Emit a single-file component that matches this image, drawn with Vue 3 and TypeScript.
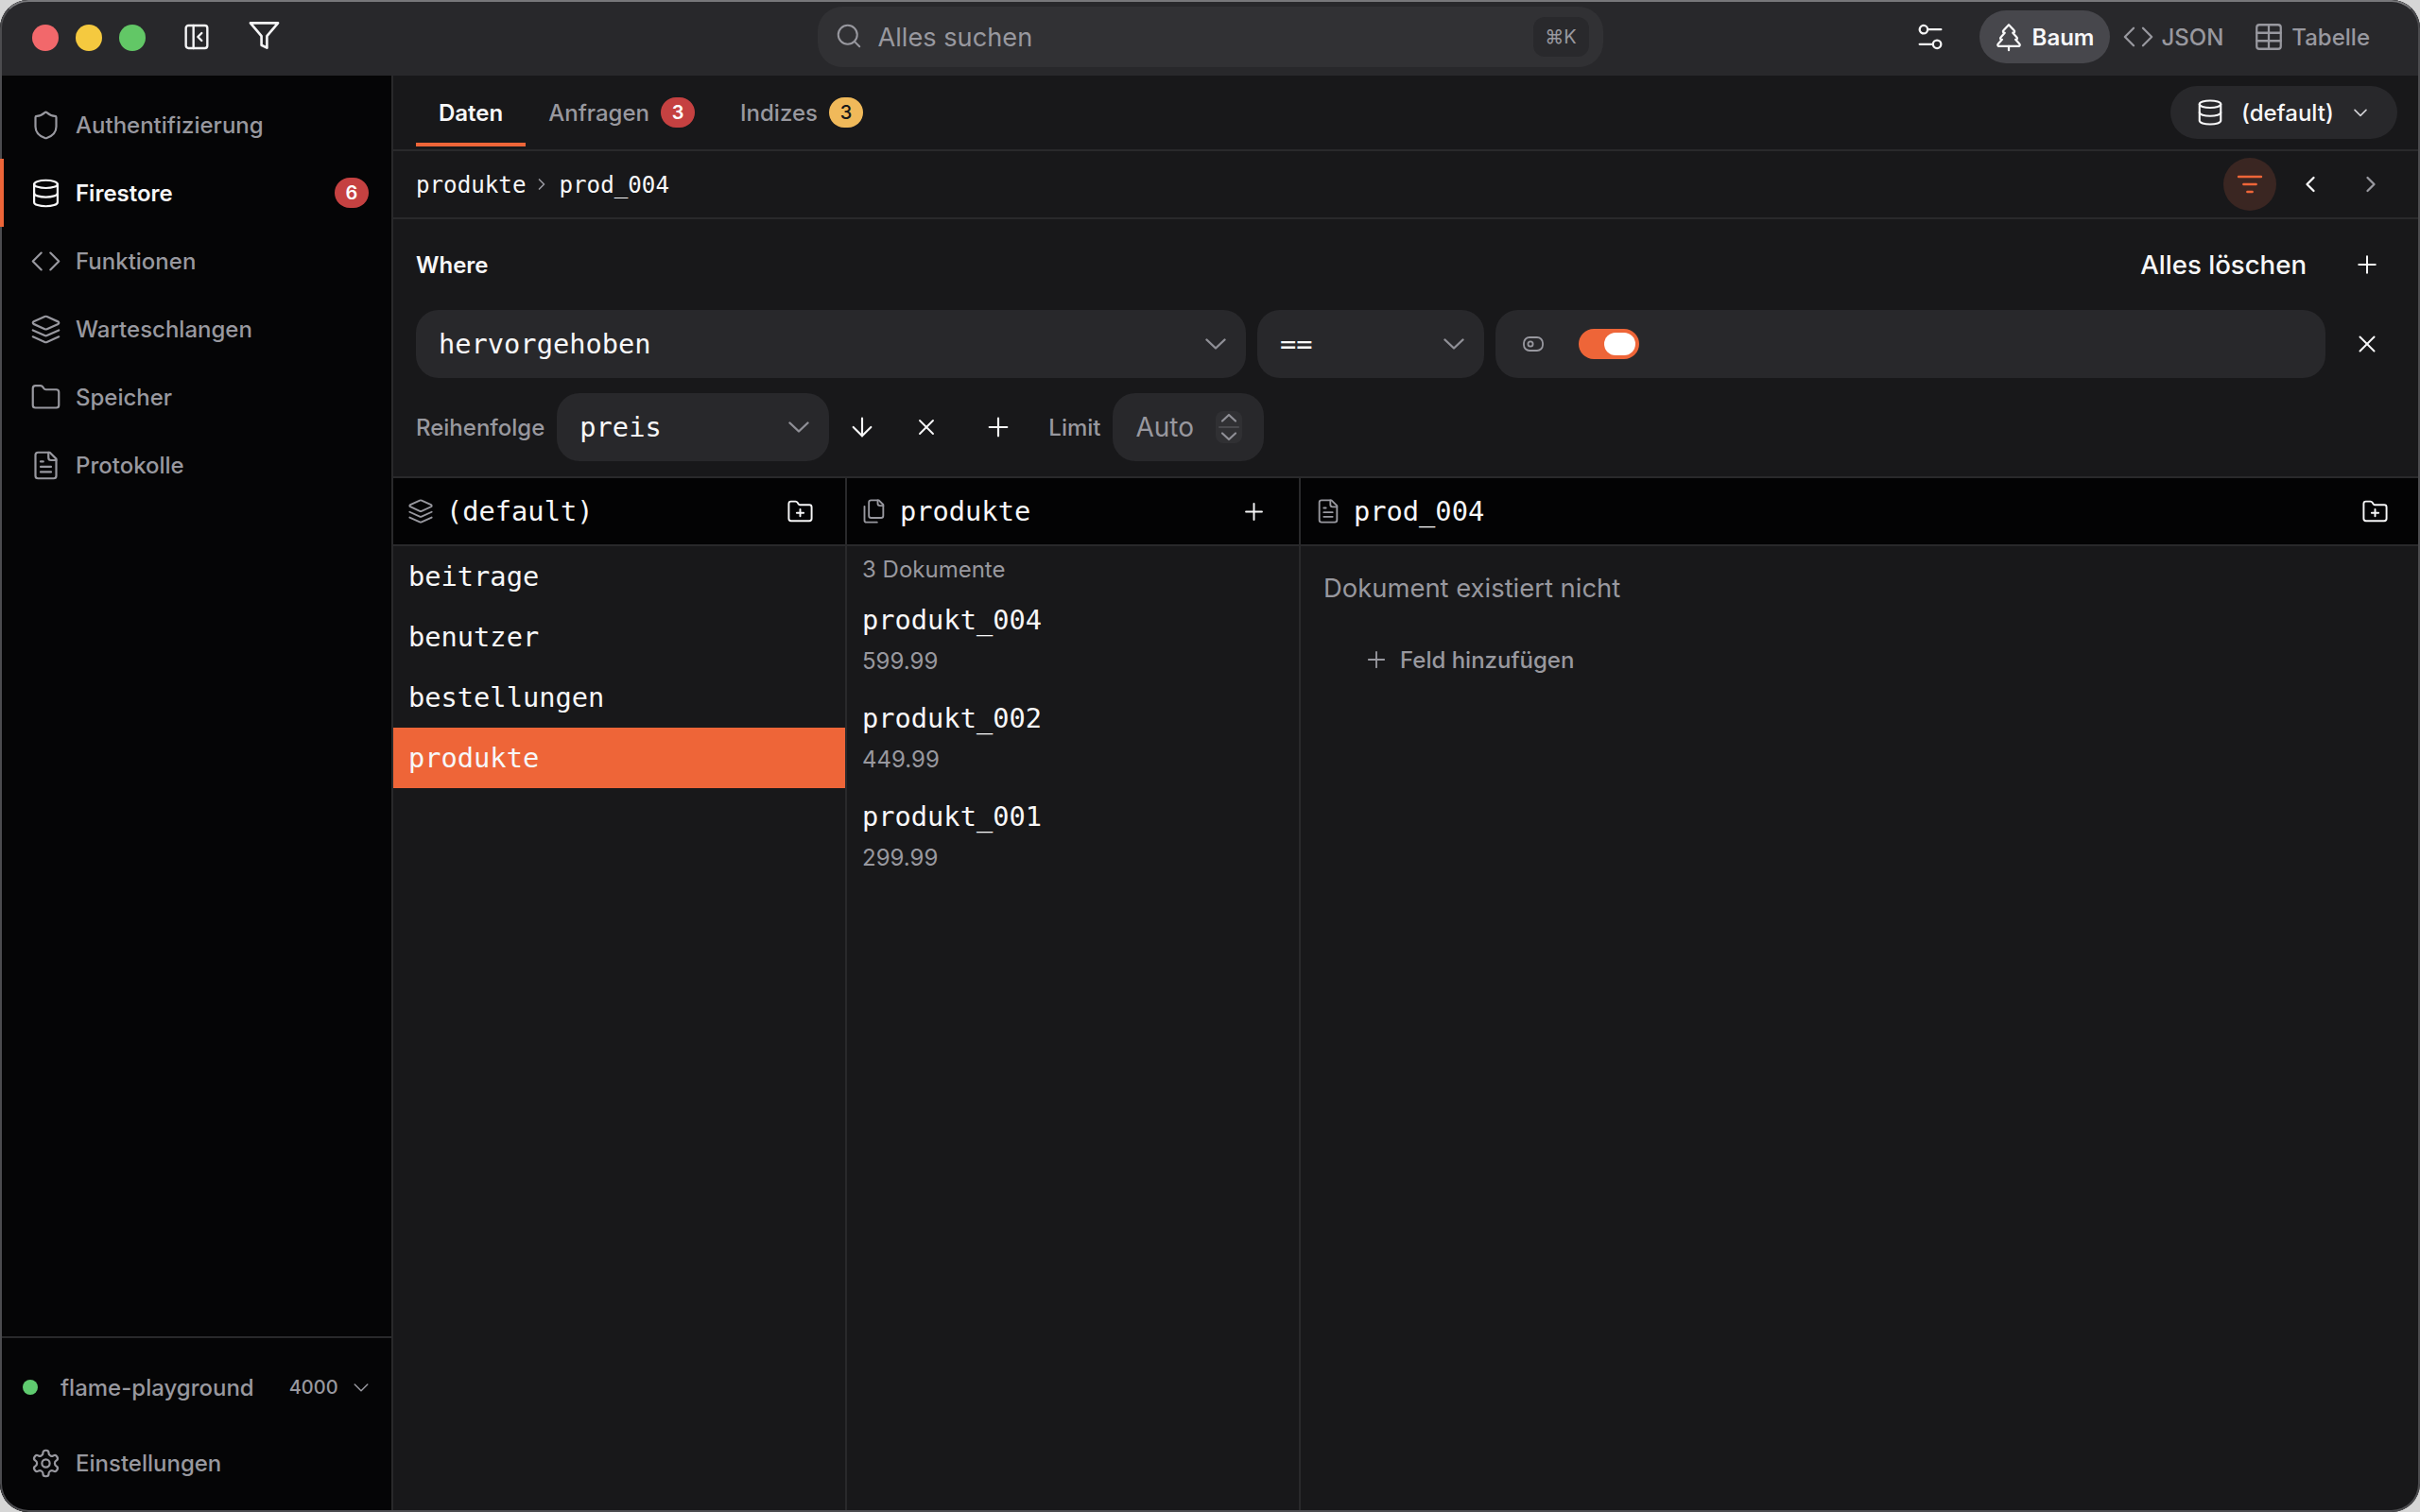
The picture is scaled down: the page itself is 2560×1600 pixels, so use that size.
<script setup lang="ts">
// inner svg markup for the line icons, all on a 24 unit grid
const folderPath =
  'M20 20a2 2 0 0 0 2-2V8a2 2 0 0 0-2-2h-7.9a2 2 0 0 1-1.69-.9L9.6 3.9A2 2 0 0 0 7.93 3H4a2 2 0 0 0-2 2v13a2 2 0 0 0 2 2Z'

const icons: Record<string, string> = {
  shield:
    '<path d="M20 13c0 5-3.5 7.5-7.66 8.95a1 1 0 0 1-.67-.01C7.5 20.5 4 18 4 13V6a1 1 0 0 1 1-1c2 0 4.5-1.2 6.24-2.72a1.17 1.17 0 0 1 1.52 0C14.51 3.81 17 5 19 5a1 1 0 0 1 1 1z"/>',
  database:
    '<ellipse cx="12" cy="5" rx="9" ry="3"/><path d="M3 5v14a9 3 0 0 0 18 0V5"/><path d="M3 12a9 3 0 0 0 18 0"/>',
  code: '<path d="M8.5 5.5 2 12l6.5 6.5"/><path d="m15.5 5.5 6.5 6.5-6.5 6.5"/>',
  layers:
    '<path d="m12.83 2.18a2 2 0 0 0-1.66 0L2.6 6.08a1 1 0 0 0 0 1.83l8.58 3.91a2 2 0 0 0 1.66 0l8.58-3.9a1 1 0 0 0 0-1.83Z"/><path d="m22 17.65-9.17 4.16a2 2 0 0 1-1.66 0L2 17.65"/><path d="m22 12.65-9.17 4.16a2 2 0 0 1-1.66 0L2 12.65"/>',
  folder: `<path d="${folderPath}"/>`,
  folderPlus: `<path d="M12 10v6"/><path d="M9 13h6"/><path d="${folderPath}"/>`,
  file: '<path d="M15 2H6a2 2 0 0 0-2 2v16a2 2 0 0 0 2 2h12a2 2 0 0 0 2-2V7Z"/><path d="M14 2v4a2 2 0 0 0 2 2h4"/><path d="M10 9H8"/><path d="M16 13H8"/><path d="M16 17H8"/>',
  files:
    '<path d="M20 7h-3a2 2 0 0 1-2-2V2"/><path d="M9 18a2 2 0 0 1-2-2V4a2 2 0 0 1 2-2h7l4 4v10a2 2 0 0 1-2 2Z"/><path d="M3 7.6v12.8A1.6 1.6 0 0 0 4.6 22h9.8"/>',
  gear: '<path d="M12.22 2h-.44a2 2 0 0 0-2 2v.18a2 2 0 0 1-1 1.73l-.43.25a2 2 0 0 1-2 0l-.15-.08a2 2 0 0 0-2.73.73l-.22.38a2 2 0 0 0 .73 2.73l.15.1a2 2 0 0 1 1 1.72v.51a2 2 0 0 1-1 1.74l-.15.09a2 2 0 0 0-.73 2.73l.22.38a2 2 0 0 0 2.73.73l.15-.08a2 2 0 0 1 2 0l.43.25a2 2 0 0 1 1 1.73V20a2 2 0 0 0 2 2h.44a2 2 0 0 0 2-2v-.18a2 2 0 0 1 1-1.73l.43-.25a2 2 0 0 1 2 0l.15.08a2 2 0 0 0 2.73-.73l.22-.39a2 2 0 0 0-.73-2.73l-.15-.08a2 2 0 0 1-1-1.74v-.5a2 2 0 0 1 1-1.74l.15-.09a2 2 0 0 0 .73-2.73l-.22-.38a2 2 0 0 0-2.73-.73l-.15.08a2 2 0 0 1-2 0l-.43-.25a2 2 0 0 1-1-1.73V4a2 2 0 0 0-2-2z"/><circle cx="12" cy="12" r="3"/>',
  panel: '<rect x="3.5" y="3" width="17" height="18" rx="2"/><path d="M9.5 3v18"/><path d="m16 15-3-3 3-3"/>',
  funnel: '<path d="M22 3H2l8 9.46V19l4 2v-8.54z"/>',
  search: '<circle cx="11" cy="11" r="8"/><path d="m21 21-4.3-4.3"/>',
  sliders:
    '<circle cx="7" cy="6.5" r="3"/><path d="M10 6.5h10"/><circle cx="17" cy="17.5" r="3"/><path d="M4 17.5h10"/>',
  tree: '<path d="m17 14 3 3.3a1 1 0 0 1-.7 1.7H4.7a1 1 0 0 1-.7-1.7L7 14h-.3a1 1 0 0 1-.7-1.7L9 9h-.2A1 1 0 0 1 8 7.3L12 3l4 4.3a1 1 0 0 1-.8 1.7H15l3 3.3a1 1 0 0 1-.7 1.7H17Z"/><path d="M12 22v-3"/>',
  table: '<rect x="3" y="3" width="18" height="18" rx="2"/><path d="M3 9h18"/><path d="M3 15h18"/><path d="M12 3v18"/>',
  plus: '<path d="M5 12h14"/><path d="M12 5v14"/>',
  close: '<path d="M18 6 6 18"/><path d="m6 6 12 12"/>',
  arrowDown: '<path d="M12 5v14"/><path d="m19 12-7 7-7-7"/>',
  listFilter: '<path d="M3 6h18"/><path d="M7 12h10"/><path d="M10 18h4"/>',
  toggle: '<rect x="2" y="5" width="20" height="14" rx="6"/><circle cx="9" cy="12" r="2.6"/>',
  left: '<path d="m15 18-6-6 6-6"/>',
  right: '<path d="m9 18 6-6-6-6"/>',
  down: '<path d="m3 8 9 9 9-9"/>',
}

const navItems = [
  { label: 'Authentifizierung', icon: 'shield' },
  { label: 'Firestore', icon: 'database', active: true, badge: 6 },
  { label: 'Funktionen', icon: 'code' },
  { label: 'Warteschlangen', icon: 'layers' },
  { label: 'Speicher', icon: 'folder' },
  { label: 'Protokolle', icon: 'file' },
]

const collections = ['beitrage', 'benutzer', 'bestellungen', 'produkte']

const documents = [
  { id: 'produkt_004', price: '599.99' },
  { id: 'produkt_002', price: '449.99' },
  { id: 'produkt_001', price: '299.99' },
]
</script>

<template>
  <div class="window">
    <header class="titlebar">
      <div class="title-left">
        <span class="light red"></span>
        <span class="light yellow"></span>
        <span class="light green"></span>
        <svg class="ico panel-ico" viewBox="0 0 24 24" v-html="icons.panel"></svg>
        <svg class="ico funnel-ico" viewBox="0 0 24 24" v-html="icons.funnel"></svg>
      </div>
      <div class="search">
        <svg class="ico search-ico" viewBox="0 0 24 24" v-html="icons.search"></svg>
        <span class="search-text">Alles suchen</span>
        <kbd class="kbd">⌘K</kbd>
      </div>
      <div class="title-right">
        <svg class="ico sliders-ico" viewBox="0 0 24 24" v-html="icons.sliders"></svg>
        <div class="view active">
          <svg class="ico view-ico" viewBox="0 0 24 24" v-html="icons.tree"></svg>
          <span>Baum</span>
        </div>
        <div class="view json">
          <svg class="ico view-ico" viewBox="0 0 24 24" v-html="icons.code"></svg>
          <span>JSON</span>
        </div>
        <div class="view">
          <svg class="ico view-ico" viewBox="0 0 24 24" v-html="icons.table"></svg>
          <span>Tabelle</span>
        </div>
      </div>
    </header>

    <div class="body">
      <aside class="sidebar">
        <nav class="nav">
          <div v-for="item in navItems" :key="item.label" :class="['nav-item', { active: item.active }]">
            <svg class="ico nav-ico" viewBox="0 0 24 24" v-html="icons[item.icon]"></svg>
            <span class="nav-label">{{ item.label }}</span>
            <span v-if="item.badge" class="badge nav-badge">{{ item.badge }}</span>
          </div>
        </nav>
        <div class="side-footer">
          <div class="project">
            <span class="dot"></span>
            <span class="project-name">flame-playground</span>
            <span class="project-port">4000</span>
            <svg class="ico project-chevron" viewBox="0 0 24 24" v-html="icons.down"></svg>
          </div>
          <div class="nav-item">
            <svg class="ico nav-ico" viewBox="0 0 24 24" v-html="icons.gear"></svg>
            <span class="nav-label">Einstellungen</span>
          </div>
        </div>
      </aside>

      <main class="main">
        <div class="tabs">
          <div class="tab active">Daten</div>
          <div class="tab">Anfragen <span class="badge">3</span></div>
          <div class="tab">Indizes <span class="badge warn">3</span></div>
          <div class="db-select">
            <svg class="ico db-ico" viewBox="0 0 24 24" v-html="icons.database"></svg>
            <span class="db-name">(default)</span>
            <svg class="ico db-chevron" viewBox="0 0 24 24" v-html="icons.down"></svg>
          </div>
        </div>

        <div class="crumbs">
          <span class="crumb">produkte</span>
          <svg class="ico crumb-sep" viewBox="0 0 24 24" v-html="icons.right"></svg>
          <span class="crumb">prod_004</span>
          <div class="crumb-actions">
            <button class="filter-btn">
              <svg class="ico filter-ico" viewBox="0 0 24 24" v-html="icons.listFilter"></svg>
            </button>
            <svg class="ico pager" viewBox="0 0 24 24" v-html="icons.left"></svg>
            <svg class="ico pager dim" viewBox="0 0 24 24" v-html="icons.right"></svg>
          </div>
        </div>

        <section class="query">
          <div class="where-head">
            <span class="where-label">Where</span>
            <span class="clear-all">Alles löschen</span>
            <span class="row-btn">
              <svg class="ico row-ico" viewBox="0 0 24 24" v-html="icons.plus"></svg>
            </span>
          </div>

          <div class="filter-row">
            <div class="field field-path">
              <span class="mono">hervorgehoben</span>
              <svg class="caret" viewBox="0 0 22 12"><path d="M1.5 1.5 11 10.5l9.5-9" /></svg>
            </div>
            <div class="field field-op">
              <span class="mono">==</span>
              <svg class="caret" viewBox="0 0 22 12"><path d="M1.5 1.5 11 10.5l9.5-9" /></svg>
            </div>
            <div class="field field-value">
              <svg class="ico toggle-ico" viewBox="0 0 24 24" v-html="icons.toggle"></svg>
              <span class="switch"><span class="knob"></span></span>
            </div>
            <span class="row-btn">
              <svg class="ico row-ico" viewBox="0 0 24 24" v-html="icons.close"></svg>
            </span>
          </div>

          <div class="order-row">
            <span class="order-label">Reihenfolge</span>
            <div class="field field-order">
              <span class="mono">preis</span>
              <svg class="caret" viewBox="0 0 22 12"><path d="M1.5 1.5 11 10.5l9.5-9" /></svg>
            </div>
            <div class="order-actions">
              <svg class="ico order-ico" viewBox="0 0 24 24" v-html="icons.arrowDown"></svg>
              <svg class="ico order-ico small" viewBox="0 0 24 24" v-html="icons.close"></svg>
              <svg class="ico order-ico plus" viewBox="0 0 24 24" v-html="icons.plus"></svg>
            </div>
            <span class="order-label limit">Limit</span>
            <div class="field field-limit">
              <span class="limit-value">Auto</span>
              <svg class="spinner" viewBox="0 0 28 34">
                <path d="M7 10.5 14 4l7 6.5" />
                <path class="spin-line" d="M4 17h20" />
                <path d="M7 23.5 14 30l7-6.5" />
              </svg>
            </div>
          </div>
        </section>

        <div class="columns">
          <div class="column col-collections">
            <div class="col-head">
              <svg class="ico head-ico" viewBox="0 0 24 24" v-html="icons.layers"></svg>
              <span class="mono">(default)</span>
              <svg class="ico head-action" viewBox="0 0 24 24" v-html="icons.folderPlus"></svg>
            </div>
            <div
              v-for="name in collections"
              :key="name"
              :class="['collection', 'mono', { selected: name === 'produkte' }]"
            >
              {{ name }}
            </div>
          </div>

          <div class="column col-docs">
            <div class="col-head">
              <svg class="ico head-ico" viewBox="0 0 24 24" v-html="icons.files"></svg>
              <span class="mono">produkte</span>
              <svg class="ico head-action" viewBox="0 0 24 24" v-html="icons.plus"></svg>
            </div>
            <div class="doc-count">3 Dokumente</div>
            <div v-for="doc in documents" :key="doc.id" class="doc">
              <div class="mono doc-id">{{ doc.id }}</div>
              <div class="doc-price">{{ doc.price }}</div>
            </div>
          </div>

          <div class="column col-detail">
            <div class="col-head">
              <svg class="ico head-ico" viewBox="0 0 24 24" v-html="icons.file"></svg>
              <span class="mono">prod_004</span>
              <svg class="ico head-action" viewBox="0 0 24 24" v-html="icons.folderPlus"></svg>
            </div>
            <div class="missing">Dokument existiert nicht</div>
            <div class="add-field">
              <svg class="ico add-ico" viewBox="0 0 24 24" v-html="icons.plus"></svg>
              <span>Feld hinzufügen</span>
            </div>
          </div>
        </div>
      </main>
    </div>
  </div>
</template>

<style>
html,
body {
  margin: 0;
  background: #d6d6d6;
}
</style>

<style scoped>
.window {
  --orange: #ee6538;
  --muted: #98989f;
  --text: #f7f7f8;
  --line: #29292b;
  --field: #28282b;
  position: relative;
  width: 2560px;
  height: 1600px;
  display: flex;
  flex-direction: column;
  border-radius: 30px;
  overflow: hidden;
  background: #18181a;
  color: var(--text);
  font-family: Inter, 'Liberation Sans', sans-serif;
}

/* hairline round the whole window, over the content */
.window::after {
  content: '';
  position: absolute;
  inset: 0;
  border-radius: 30px;
  border: 2px solid #4c4c4f;
  border-top-color: #77777a;
  pointer-events: none;
}

.ico {
  display: block;
  flex-shrink: 0;
  fill: none;
  stroke: currentColor;
  stroke-width: 1.6;
  stroke-linecap: round;
  stroke-linejoin: round;
}

.mono {
  font-family: 'DejaVu Sans Mono', 'Liberation Mono', monospace;
  font-size: 28.7px;
}

/* title bar */
.titlebar {
  flex: 0 0 80px;
  display: grid;
  grid-template-columns: 1fr 831px 1fr;
  align-items: center;
  background: #28282b;
}

.title-left {
  display: flex;
  align-items: center;
  padding-left: 34px;
}

.light {
  width: 28px;
  height: 28px;
  border-radius: 50%;
  margin-right: 18px;
}
.red {
  background: #f2686b;
}
.yellow {
  background: #f5c93f;
}
.green {
  background: #62c766;
}

.panel-ico {
  width: 32px;
  height: 32px;
  margin-left: 20px;
  margin-top: -2px;
  color: #f5f5f6;
  stroke-width: 1.8;
}
.funnel-ico {
  width: 35px;
  height: 35px;
  margin-left: 38px;
  margin-top: -5px;
  color: #f5f5f6;
  stroke-width: 1.8;
}

.search {
  height: 64px;
  margin-top: -2px;
  display: flex;
  align-items: center;
  padding: 0 15px 0 18px;
  border-radius: 26px;
  background: #313134;
  color: var(--muted);
}
.search-ico {
  width: 30px;
  height: 30px;
  margin-top: -2px;
}
.search-text {
  margin-left: 16px;
  font-size: 27.2px;
}
.kbd {
  margin-left: auto;
  width: 59px;
  height: 42px;
  display: flex;
  align-items: center;
  justify-content: center;
  border-radius: 12px;
  background: #29292c;
  font-family: Inter, 'DejaVu Sans', sans-serif;
  font-size: 20px;
}

.title-right {
  display: flex;
  align-items: center;
  justify-content: flex-end;
  padding-right: 38px;
  margin-top: -2px;
}
.sliders-ico {
  width: 34px;
  height: 34px;
  margin-right: 35px;
  color: #f5f5f6;
}
.view {
  height: 56px;
  display: flex;
  align-items: center;
  gap: 7px;
  padding: 0 15px 0 16px;
  border-radius: 28px;
  color: var(--muted);
  font-size: 24px;
  font-weight: 500;
}
.view.json {
  padding-left: 13px;
  gap: 7px;
}
.view.active {
  gap: 8px;
  background: #47474c;
  color: var(--text);
  font-weight: 600;
  padding: 0 17px 0 14px;
}
.view-ico {
  width: 34px;
  height: 34px;
}

/* sidebar */
.body {
  flex: 1;
  min-height: 0;
  display: flex;
}
.sidebar {
  flex: 0 0 416px;
  box-sizing: border-box;
  display: flex;
  flex-direction: column;
  border-right: 2px solid var(--line);
  background: #050506;
}
.nav {
  padding-top: 16px;
}
.nav-item {
  position: relative;
  height: 72px;
  display: flex;
  align-items: center;
  padding: 0 24px 0 32px;
  color: var(--muted);
}
.nav-item.active {
  color: var(--text);
  font-weight: 600;
}
.nav-item.active::before {
  content: '';
  position: absolute;
  z-index: 1;
  left: 0;
  top: 0;
  bottom: 0;
  width: 4px;
  background: var(--orange);
}
.nav-ico {
  width: 33px;
  height: 33px;
  stroke-width: 1.6;
}
.nav-label {
  margin-left: 15px;
  font-size: 24px;
  font-weight: inherit;
}
.nav-item:not(.active) .nav-label {
  font-weight: 500;
}
.nav-badge {
  margin-left: auto;
}

.badge {
  width: 36px;
  height: 32px;
  display: inline-flex;
  align-items: center;
  justify-content: center;
  border-radius: 16px;
  background: #c54141;
  color: #fff;
  font-size: 20px;
  font-weight: 600;
}
.badge.warn {
  background: #f0b95a;
  color: #18181a;
  font-weight: 500;
}

.side-footer {
  margin-top: auto;
  padding-bottom: 24px;
  border-top: 2px solid var(--line);
}
.project {
  height: 104px;
  display: flex;
  align-items: center;
  padding-left: 24px;
  color: var(--muted);
}
.dot {
  width: 16px;
  height: 16px;
  border-radius: 50%;
  background: #5fcb6f;
}
.project-name {
  margin-left: 24px;
  font-size: 24px;
  font-weight: 500;
}
.project-port {
  margin-left: 37px;
  font-size: 20px;
  font-weight: 500;
}
.project-chevron {
  width: 18px;
  height: 18px;
  margin-left: 15px;
  stroke-width: 2;
}
.side-footer .nav-item {
  height: 56px;
}

/* main column */
.main {
  flex: 1;
  min-width: 0;
  display: flex;
  flex-direction: column;
}
.tabs {
  flex: 0 0 80px;
  box-sizing: border-box;
  display: flex;
  align-items: stretch;
  padding: 0 24px;
  border-bottom: 2px solid var(--line);
}
.tab {
  position: relative;
  display: flex;
  align-items: center;
  gap: 12px;
  padding: 0 24px;
  color: var(--muted);
  font-size: 24px;
  font-weight: 500;
}
.tab.active {
  color: var(--text);
  font-weight: 600;
}
.tab.active::after {
  content: '';
  position: absolute;
  left: 0;
  right: 0;
  bottom: 3px;
  height: 4px;
  background: var(--orange);
}
.db-select {
  align-self: center;
  margin-left: auto;
  width: 240px;
  height: 56px;
  box-sizing: border-box;
  display: flex;
  align-items: center;
  padding-left: 27px;
  border-radius: 28px;
  background: var(--field);
}
.db-ico {
  width: 30px;
  height: 30px;
  stroke-width: 1.7;
}
.db-name {
  margin-left: 18px;
  font-size: 24px;
  font-weight: 500;
}
.db-chevron {
  width: 16px;
  height: 16px;
  margin-left: 20px;
  color: #d0d0d4;
  stroke-width: 2.4;
}

.crumbs {
  flex: 0 0 72px;
  box-sizing: border-box;
  display: flex;
  align-items: center;
  padding: 0 24px;
  border-bottom: 2px solid var(--line);
}
.crumb {
  padding-top: 2px;
  font-family: 'DejaVu Sans Mono', 'Liberation Mono', monospace;
  font-size: 24.2px;
}
.crumb-sep {
  width: 20px;
  height: 20px;
  margin: 0 9px 0 6px;
  color: var(--muted);
  stroke-width: 2;
}
.crumb-actions {
  margin-left: auto;
  display: flex;
  align-items: center;
}
.filter-btn {
  width: 56px;
  height: 56px;
  display: flex;
  align-items: center;
  justify-content: center;
  padding: 0;
  border: 0;
  border-radius: 50%;
  background: #3a2622;
  color: var(--orange);
}
.filter-ico {
  width: 32px;
  height: 32px;
  stroke-width: 1.8;
}
.pager {
  width: 28px;
  height: 28px;
  margin-left: 22px;
  color: var(--text);
  stroke-width: 2;
}
.pager.dim {
  margin-left: 36px;
  margin-right: 14px;
  color: var(--muted);
}

/* query builder */
.query {
  flex: 0 0 272px;
  box-sizing: border-box;
  display: flex;
  flex-direction: column;
  padding: 24px 24px 16px;
  border-bottom: 2px solid var(--line);
}
.where-head {
  height: 48px;
  display: flex;
  align-items: center;
}
.where-label {
  font-size: 24px;
  font-weight: 600;
}
.clear-all {
  margin-left: auto;
  margin-right: 32px;
  font-size: 27.6px;
  font-weight: 500;
}
.row-btn {
  flex: 0 0 64px;
  display: flex;
  justify-content: center;
}
.row-ico {
  width: 30px;
  height: 30px;
}
.filter-row {
  display: flex;
  gap: 12px;
  margin-top: 24px;
  align-items: center;
}
.field {
  box-sizing: border-box;
  height: 72px;
  display: flex;
  align-items: center;
  justify-content: space-between;
  padding: 0 21px 0 24px;
  border-radius: 24px;
  background: var(--field);
}
.field-path {
  flex: 0 0 878px;
}
.field-op {
  flex: 0 0 240px;
}
.field-value {
  flex: 1;
  justify-content: flex-start;
  padding-left: 28px;
}
.caret {
  width: 22px;
  height: 12px;
  fill: none;
  stroke: #8f8f96;
  stroke-width: 2.4;
  stroke-linecap: round;
  stroke-linejoin: round;
}
.toggle-ico {
  width: 24px;
  height: 24px;
  color: var(--muted);
  stroke-width: 1.8;
}
.switch {
  width: 64px;
  height: 32px;
  margin-left: 36px;
  box-sizing: border-box;
  display: flex;
  align-items: center;
  justify-content: flex-end;
  padding-right: 4px;
  border-radius: 16px;
  background: var(--orange);
}
.knob {
  width: 33px;
  height: 24px;
  border-radius: 12px;
  background: #fff;
}
.order-row {
  display: flex;
  align-items: center;
  margin-top: 16px;
}
.order-label {
  color: var(--muted);
  font-size: 24px;
  font-weight: 500;
}
.field-order {
  flex: 0 0 288px;
  margin-left: 13px;
}
.order-actions {
  display: flex;
  align-items: center;
  margin-left: 19px;
}
.order-ico {
  width: 32px;
  height: 32px;
}
.order-ico.small {
  width: 28px;
  height: 28px;
  margin-left: 38px;
}
.order-ico.plus {
  margin-left: 46px;
}
.limit {
  margin-left: 37px;
}
.field-limit {
  flex: 0 0 160px;
  margin-left: 13px;
  padding: 0 23px 0 24px;
}
.limit-value {
  color: var(--muted);
  font-size: 28px;
}
.spinner {
  width: 28px;
  height: 34px;
  border-radius: 8px;
  background: #303033;
  fill: none;
  stroke: #8f8f96;
  stroke-width: 2.2;
  stroke-linecap: round;
  stroke-linejoin: round;
}
.spin-line {
  stroke: #4a4a4e;
}

/* three browser columns */
.columns {
  flex: 1;
  min-height: 0;
  display: grid;
  grid-template-columns: 480px 480px 1fr;
}
.column {
  box-sizing: border-box;
  border-right: 2px solid var(--line);
}
.col-detail {
  border-right: 0;
}
.col-head {
  box-sizing: border-box;
  height: 72px;
  display: flex;
  align-items: center;
  padding: 0 15px;
  border-bottom: 2px solid var(--line);
  background: #030304;
}
.head-ico {
  width: 28px;
  height: 28px;
  margin-right: 13px;
  color: var(--muted);
}
.head-action {
  margin-left: auto;
  margin-right: 18px;
  width: 29px;
  height: 29px;
}

.collection {
  height: 64px;
  display: flex;
  align-items: center;
  padding-left: 16px;
}
.collection.selected {
  background: var(--orange);
}

.doc-count {
  height: 48px;
  display: flex;
  align-items: center;
  padding-left: 16px;
  color: var(--muted);
  font-size: 24px;
}
.doc {
  height: 104px;
  box-sizing: border-box;
  padding: 10px 16px 0;
}
.doc-id {
  height: 40px;
  line-height: 40px;
}
.doc-price {
  margin-top: 6px;
  height: 36px;
  line-height: 36px;
  color: var(--muted);
  font-size: 24px;
}

.missing {
  margin-top: 22px;
  padding-left: 24px;
  height: 44px;
  line-height: 44px;
  color: var(--muted);
  font-size: 27.4px;
}
.add-field {
  margin-top: 32px;
  height: 44px;
  display: flex;
  align-items: center;
  gap: 11px;
  padding-left: 66px;
  color: var(--muted);
  font-size: 24px;
  font-weight: 500;
}
.add-ico {
  width: 28px;
  height: 28px;
}
</style>
